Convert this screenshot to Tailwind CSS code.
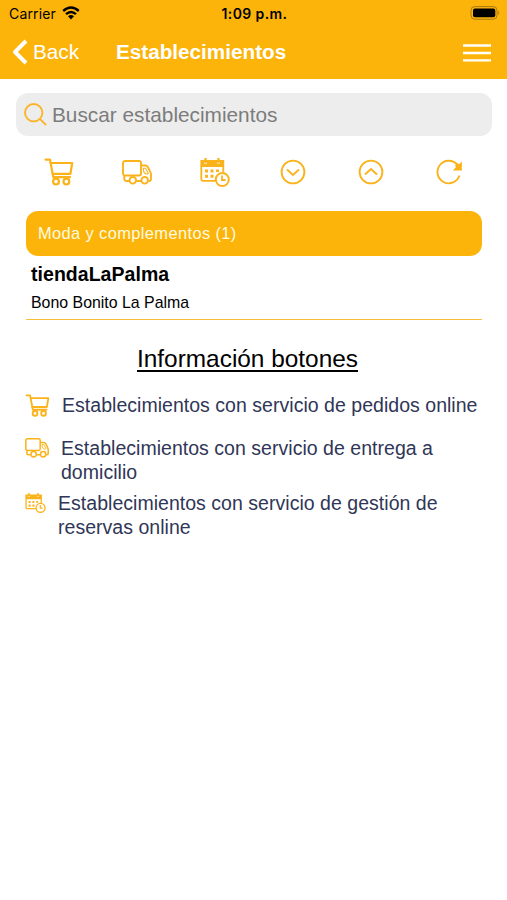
<!DOCTYPE html>
<html lang="es">
<head>
<meta charset="utf-8">
<title>Establecimientos</title>
<script src="https://cdn.jsdelivr.net/npm/@tailwindcss/browser@4"></script>
</head>
<body class="bg-white w-[507px] h-[900px] overflow-hidden font-['Liberation_Sans',Arial,sans-serif]">
<svg class="hidden">
  <symbol id="cart" viewBox="0 0 30 28">
    <g fill="none" stroke="currentColor" stroke-width="2.2" stroke-linecap="round" stroke-linejoin="round">
      <path d="M1.500 1.600H6L9.300 19.200H26"/><path d="M6.700 5H28.200L26.400 15.800H8.600"/>
      <circle cx="12" cy="23.600" r="2.900"/><circle cx="22.400" cy="23.600" r="2.900"/>
    </g>
  </symbol>
  <symbol id="truck" viewBox="0 0 30 25">
    <g fill="none" stroke="currentColor" stroke-width="1.9" stroke-linejoin="round">
      <rect x="1" y="1" width="18" height="14.500" rx="2"/>
      <path d="M19 5.500H23.500Q25 5.500 25.800 7L28.200 11.600Q29 13 29 14.500V19.500Q29 21 27.500 21H26.500M19 21H14.700M7 21H4.500Q2.300 21 2.300 18.800V15.500"/>
      <path d="M21.300 8.200H23.400L26.300 13.200Q24 14.800 22.600 13.200Q21.300 11.800 21.300 8.200Z" stroke-width="1.100"/>
      <circle cx="10.800" cy="20.300" r="3.300"/><circle cx="22.700" cy="20.300" r="3.300"/>
    </g>
  </symbol>
  <symbol id="calendar" viewBox="0 0 30 29">
    <g fill="none" stroke="currentColor" stroke-width="1.800">
      <path d="M15 22.800H3Q1.300 22.800 1.300 21V3H23.300V14.500"/>
      <path d="M5.500 0V5M18.500 0V5" stroke-width="2.200"/>
      <circle cx="22.300" cy="21.500" r="6.500" stroke-width="2"/>
      <path d="M22 17.500V22H25.500"/>
    </g>
    <path fill="currentColor" d="M1 3H4V5.500H7V3H17V5.500H20V3H24V9H1ZM5 11.500h3v3h-3zM10.500 11.500h3v3h-3zM16 11.500h3v2.500h-3zM5 16.800h3v3h-3zM10.500 16.800h3v3h-3z"/>
  </symbol>
</svg>

<header class="h-[79px] bg-[#fcb40a]">
  <div class="h-7 grid grid-cols-3 items-center pl-[9px] pr-[7px] pb-[2px] text-black font-['Inter',sans-serif]">
    <div class="flex items-center gap-[6px] text-[14px] tracking-[0.15px]">
      <span>Carrier</span>
      <svg class="w-[18px] h-[14px]" viewBox="0 0 18 14"><path d="M1.200 5Q9 -1.800 16.800 5M4 8.100Q9 3.700 14 8.100" fill="none" stroke="#000" stroke-width="2.400"/><path d="M6 10.300Q9 7.800 12 10.300L9 13.500Z"/></svg>
    </div>
    <div class="text-[14px] font-semibold text-center tracking-[0.400px] whitespace-nowrap">1:09 p.m.</div>
    <div class="flex justify-end">
      <svg class="w-[30px] h-[14px]" viewBox="0 0 30 14"><rect x="1" y=".6" width="26" height="12.600" rx="3.800" fill="none" stroke="#a77a12"/><rect x="3" y="2.500" width="22.300" height="8.800" rx="2"/><path d="M28.300 4.500Q30.300 6.800 28.300 9Z" fill="#a77a12"/></svg>
    </div>
  </div>
  <div class="h-[48px] flex items-center pl-[12px] pr-[16px] text-white text-[20.7px]">
    <svg class="w-4 h-[26px] shrink-0" viewBox="0 0 16 26"><path d="M14 2L3 13L14 24" fill="none" stroke="#fff" stroke-width="3.900" stroke-linejoin="round"/></svg>
    <span class="ml-[5px] w-[83px]">Back</span>
    <h1 class="font-bold">Establecimientos</h1>
    <svg class="ml-auto w-[28px] h-[20px]" viewBox="0 0 28 20"><path d="M0 3.500H28M0 11H28M0 18.300H28" stroke="#fff" stroke-width="2.300"/></svg>
  </div>
</header>

<main>
  <div class="mt-[14px] ml-4 w-[476px] h-[43px] rounded-[12px] bg-[#ededed] flex items-center pl-[8px] text-[20.8px] text-[#7c7c7c]">
    <svg class="w-[23px] h-[23px] mr-[5px]" viewBox="0 0 23 23"><g fill="none" stroke="#fcb427" stroke-width="1.900"><circle cx="9.700" cy="9.700" r="8.700"/><path d="M15.700 15.700L22 22"/></g></svg>
    <span>Buscar establecimientos</span>
  </div>

  <nav class="mt-[13px] ml-[20px] w-[468px] h-[46px] grid grid-cols-6 items-center justify-items-center text-[#fbb31c]">
    <svg class="w-[30px] h-[28px]"><use href="#cart"/></svg>
    <svg class="w-[30px] h-[25px]"><use href="#truck"/></svg>
    <svg class="w-[30px] h-[29px]"><use href="#calendar"/></svg>
    <svg class="w-[26px] h-[26px]" viewBox="0 0 26 26" fill="none" stroke="currentColor" stroke-width="1.900"><circle cx="13" cy="13" r="11.400"/><path d="M7 10.500L13 16L19 10.500"/></svg>
    <svg class="w-[26px] h-[26px]" viewBox="0 0 26 26" fill="none" stroke="currentColor" stroke-width="1.900"><circle cx="13" cy="13" r="11.400"/><path d="M7 15.500L13 10L19 15.500"/></svg>
    <svg class="w-[26px] h-[26px]" viewBox="0 0 26 26" fill="none"><path d="M21.200 5.500A11.300 11.300 0 1 0 23.500 16.500" stroke="currentColor" stroke-width="1.900"/><path d="M25.900 2.500V11.400H16.800L20 8L19 6.500L21.200 4.200L23 5.300Z" fill="currentColor"/></svg>
  </nav>

  <section class="mt-[16px] ml-[26px] w-[456px] h-[109px] flex flex-col">
    <div class="h-[45px] rounded-[12px] bg-[#fcb40a] pl-[12px] flex items-center text-[#fffbe0] text-[16.400px] tracking-[0.400px]">Moda y complementos (1)</div>
    <h2 class="mt-[6px] pl-[5px] h-6 leading-6 text-[19.500px] tracking-[0.040px] font-bold text-black">tiendaLaPalma</h2>
    <p class="mt-[7px] pl-[5px] h-5 leading-5 text-[15.900px] text-black">Bono Bonito La Palma</p>
    <div class="mt-auto h-[1.500px] bg-[#f9bd3c]"></div>
  </section>

  <h3 class="mt-[25px] ml-[137px] h-[28px] leading-[28px] text-[24.400px] text-black underline decoration-[1.500px] underline-offset-[3px]">Información botones</h3>

  <ul class="mt-[20px] pl-[25px] text-[19.500px] tracking-[0.030px] leading-[24px] text-[#303657]">
    <li class="h-[43px] flex"><svg class="w-[25px] h-[23px] mt-[1px] mr-[12px] shrink-0 text-[#fbb31c]"><use href="#cart"/></svg><span class="whitespace-nowrap">Establecimientos con servicio de pedidos online</span></li>
    <li class="h-[55px] flex"><svg class="w-[24px] h-[20px] mt-[2px] mr-[12px] shrink-0 text-[#fbb31c]"><use href="#truck"/></svg><span class="whitespace-nowrap">Establecimientos con servicio de entrega a<br>domicilio</span></li>
    <li class="flex"><svg class="w-[21px] h-[20px] mt-[2px] mr-[12px] shrink-0 text-[#fbb31c]"><use href="#calendar"/></svg><span class="whitespace-nowrap">Establecimientos con servicio de gestión de<br>reservas online</span></li>
  </ul>
</main>
</body>
</html>
